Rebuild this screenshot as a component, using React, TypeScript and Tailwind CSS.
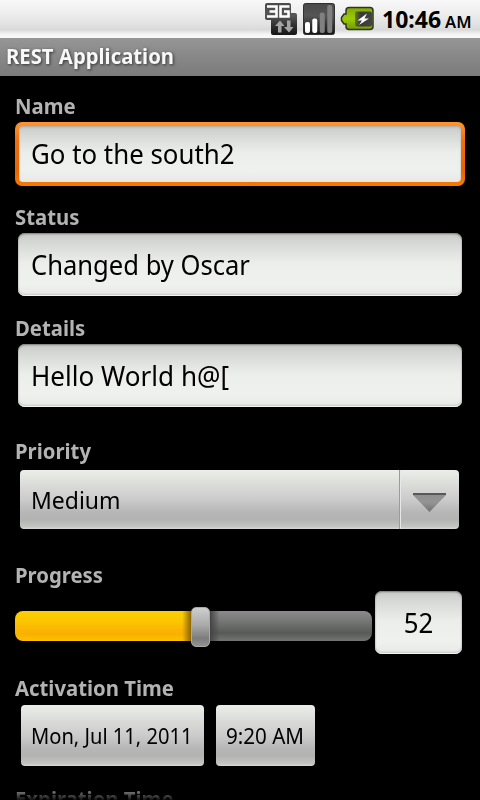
import type { ReactNode } from "react";

const font = "font-['Noto_Sans','Open_Sans',sans-serif]";

function Label({ children, className = "" }: { children: ReactNode; className?: string }) {
  return (
    <div className={`ml-[15px] h-7 w-fit origin-left scale-x-[0.99] text-[20.5px] leading-7 font-bold whitespace-nowrap text-[#b3b3b3] ${className}`}>
      {children}
    </div>
  );
}

const well =
  "bg-[linear-gradient(180deg,#c8cac8_0%,#d5d7d5_14%,#e0e2e0_30%,#eceeeb_48%,#eff1ee_80%,#e8e9e7_100%)] text-black";

const sunken =
  "rounded-[7px] shadow-[inset_0_2px_2px_-1px_#777,inset_1px_0_2px_-1px_#999,inset_-1px_0_2px_-1px_#999,inset_0_-1px_0_#fff,inset_0_-3px_2px_-1px_#c8cac7]";

const button =
  "rounded-[4px] bg-[linear-gradient(180deg,#eceeea_0%,#dcdedb_22%,#cbcbcb_50%,#b5b6b5_72%,#b3b4b2_84%,#c3c5c2_96%,#d8dad7_100%)] text-black";

function StatusBar() {
  return (
    <div className="flex h-[38px] items-start bg-[linear-gradient(180deg,#f8f8f8_0%,#eeeeee_35%,#dfdfdf_70%,#d9d9d9_78%,#f4f4f4_90%,#fafafa_100%)]">
      <svg className="ml-[256px] h-[38px] w-[120px] shrink-0" viewBox="256 0 120 38">
        <defs>
          <linearGradient id="dark" x1="0" y1="0" x2="0" y2="1">
            <stop offset="0" stopColor="#4a4a4a" />
            <stop offset="0.4" stopColor="#555555" />
            <stop offset="0.7" stopColor="#303030" />
            <stop offset="1" stopColor="#161616" />
          </linearGradient>
          <linearGradient id="green" x1="0" y1="0" x2="0" y2="1">
            <stop offset="0" stopColor="#80a800" />
            <stop offset="0.5" stopColor="#99cb08" />
            <stop offset="1" stopColor="#739b00" />
          </linearGradient>
          <linearGradient id="cell" x1="0" y1="0" x2="1" y2="0">
            <stop offset="0" stopColor="#3c3c3c" stopOpacity="0.55" />
            <stop offset="0.35" stopColor="#383838" />
            <stop offset="1" stopColor="#444444" />
          </linearGradient>
        </defs>
        <path d="M267 3h22q2 0 2 2v8h4q2 0 2 2v18q0 2-2 2h-22q-2 0-2-2V20h-4q-2 0-2-2V5q0-2 2-2z" fill="url(#dark)" />
        <path d="M267 6.500h9.500v10H267M269.500 11.500h7M289.500 6.500h-9v10h8v-5H284" fill="none" stroke="#fff" strokeWidth="2.600" />
        <path d="M280 20.500l4.500 5.500h-3v6.500h-3.500V26h-3zM289 32.500l4.500-5.500h-3v-6.500H287V27h-3z" fill="#a5a5a5" />
        <rect x="303.500" y="3.500" width="31" height="31" rx="2" fill="url(#dark)" stroke="#303030" />
        <rect x="305" y="22" width="5" height="11" rx="2" fill="#fff" />
        <rect x="312.250" y="18.500" width="5" height="14.500" rx="2" fill="#fff" />
        <rect x="319.750" y="12.500" width="5" height="20.500" rx="2" fill="#808080" />
        <rect x="327.250" y="5" width="5" height="28" rx="2" fill="#808080" />
        <path d="M349 7.500h21q3 0 3 3v16q0 3-3 3h-21q-3 0-3-3v-2.500h-2l-2.500-3.500v-3l2.500-3.500h2v-3.500q0-3 3-3z" fill="url(#green)" stroke="#303030" strokeWidth="1.500" />
        <rect x="355" y="11.500" width="17" height="15" rx="2" fill="url(#cell)" />
        <path d="M367 13.500l-9.500 7h4.500l-3 4.500 10-6.500h-4.500z" fill="#fff" />
      </svg>
      <div className="ml-[6px] flex items-baseline whitespace-nowrap text-black">
        <span className="text-[23px] leading-[38px] font-bold">10:46</span>
        <span className="ml-[4px] text-[16.5px] font-semibold">AM</span>
      </div>
    </div>
  );
}

function Field({ children, fit }: { children: ReactNode; fit: string }) {
  return (
    <div className={`mx-[18px] mt-[2px] flex h-[63px] items-center pl-[13px] ${well} ${sunken}`}>
      <span className={`origin-left text-[27px] leading-[63px] whitespace-nowrap ${fit}`}>{children}</span>
    </div>
  );
}

export default function App() {
  return (
    <div className={`flex h-[800px] w-[480px] flex-col overflow-hidden bg-black ${font}`}>
      <StatusBar />
      <div className="flex h-[38px] shrink-0 items-start bg-[linear-gradient(180deg,#969696_0%,#8a8a8a_40%,#7b7b7b_100%)] pl-[6px]">
        <span className="origin-left scale-x-[0.99] text-[20.5px] leading-[36px] font-bold whitespace-nowrap text-[#f8f8f8] [text-shadow:1px_1px_3px_#333]">
          REST Application
        </span>
      </div>

      <Label className="mt-4">Name</Label>
      <div className="mx-[15px] mt-[2px] h-16 rounded-[7px] bg-[linear-gradient(180deg,#ff9630_0%,#f07010_30%,#e86500_75%,#f57a00_100%)] p-1">
        <div className={`flex h-14 items-center rounded-[4px] pl-[12px] shadow-[inset_0_1px_2px_#aaa] ${well}`}>
          <span className="origin-left scale-x-[0.957] text-[27px] leading-[56px] whitespace-nowrap">Go to the south2</span>
        </div>
      </div>

      <Label className="mt-[17px]">Status</Label>
      <Field fit="scale-x-[0.947]">Changed by Oscar</Field>

      <Label className="mt-[18px]">Details</Label>
      <Field fit="scale-x-[0.966]">Hello World h@[</Field>

      <Label className="mt-[30px]">Priority</Label>
      <div className={`mt-[5px] mr-[21px] ml-[20px] flex h-[59px] ${button}`}>
        <div className="flex-1 pl-[11px]">
          <span className="block w-fit origin-left scale-x-[0.957] text-[24px] leading-[59px]">Medium</span>
        </div>
        <div className="flex w-[60px] items-center justify-center border-l border-[#9b9b9b] shadow-[inset_1px_0_0_#e8e8e8]">
          <svg className="mt-[6px] h-[19px] w-[33px]" viewBox="0 0 33 19">
            <defs>
              <linearGradient id="arrow" x1="0" y1="0" x2="0" y2="1">
                <stop offset="0" stopColor="#8e8e8e" />
                <stop offset="0.5" stopColor="#949494" />
                <stop offset="1" stopColor="#707070" />
              </linearGradient>
            </defs>
            <path d="M0 0h33v2L16.500 19 0 2z" fill="url(#arrow)" />
            <path d="M0 1h33" stroke="#585858" strokeWidth="2" />
          </svg>
        </div>
      </div>

      <Label className="mt-[32px]">Progress</Label>
      <div className="mt-[2px] flex h-[63px] items-center gap-[3px] pl-[15px]">
        <div className="mt-[8px] flex h-[40px] w-[357px] items-center">
          <div className="-mt-[2px] h-[30px] w-[176px] rounded-l-[8px] bg-[linear-gradient(90deg,transparent_95%,#8c6500_100%),linear-gradient(180deg,#fcd000_0%,#fbc500_35%,#fab000_75%,#fcc000_100%)]" />
          <div className="h-10 w-[19px] rounded-[5px] border border-[#a9a9a9] bg-[linear-gradient(180deg,#cecece_0%,#aaaaaa_45%,#7b7c7b_80%,#919391_100%)]" />
          <div className="-mt-[2px] h-[30px] flex-1 rounded-r-[8px] bg-[linear-gradient(90deg,#444444_0%,transparent_6%),linear-gradient(180deg,#8a8b8a_0%,#717371_40%,#585a58_73%,#737573_100%)]" />
        </div>
        <div className={`flex h-[63px] w-[87px] items-center justify-center text-[27px] ${well} ${sunken}`}>
          <span className="mr-px scale-x-[0.957] leading-[63px]">52</span>
        </div>
      </div>

      <Label className="mt-[20px]">Activation Time</Label>
      <div className="mt-[3px] ml-[21px] flex gap-3">
        <div className={`h-[61px] w-[183px] pl-[10px] ${button}`}>
          <span className="block w-fit origin-left scale-x-[0.958] text-[21px] leading-[62px] whitespace-nowrap">Mon, Jul 11, 2011</span>
        </div>
        <div className={`h-[61px] w-[99px] pl-[10px] ${button}`}>
          <span className="block w-fit origin-left scale-x-[0.98] text-[21px] leading-[62px] whitespace-nowrap">9:20 AM</span>
        </div>
      </div>

      <Label className="mt-[19px] bg-[linear-gradient(180deg,#707070_7px,#101010_15px)] bg-clip-text text-transparent">Expiration Time</Label>
    </div>
  );
}
